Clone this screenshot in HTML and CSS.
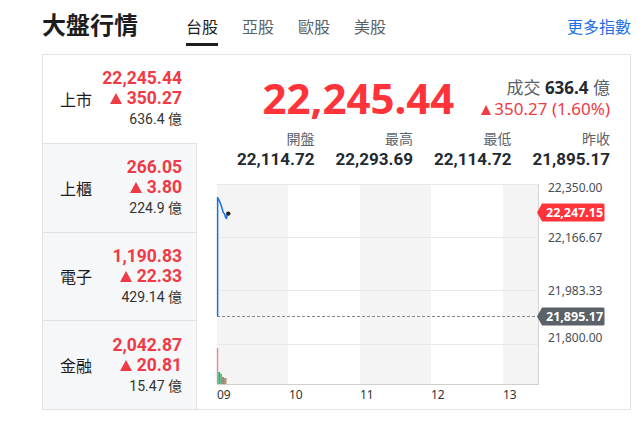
FILE: index.html
```html
<!DOCTYPE html>
<html lang="zh-Hant">
<head>
<meta charset="utf-8">
<title>大盤行情</title>
<link rel="stylesheet" href="styles.css">
</head>
<body>
<div class="page">
  <header class="head">
    <h1 class="title">大盤行情</h1>
    <nav class="tabs">
      <span class="tab active">台股</span>
      <span class="tab">亞股</span>
      <span class="tab">歐股</span>
      <span class="tab">美股</span>
    </nav>
    <a class="more">更多指數</a>
  </header>

  <section class="card">
    <div class="list">
      <div class="row selected">
        <span class="name">上市</span>
        <div class="vals">
          <div class="price up">22,245.44</div>
          <div class="chg up"><span class="tri"></span>350.27</div>
          <div class="vol">636.4 億</div>
        </div>
      </div>
      <div class="row">
        <span class="name">上櫃</span>
        <div class="vals">
          <div class="price up">266.05</div>
          <div class="chg up"><span class="tri"></span>3.80</div>
          <div class="vol">224.9 億</div>
        </div>
      </div>
      <div class="row">
        <span class="name">電子</span>
        <div class="vals">
          <div class="price up">1,190.83</div>
          <div class="chg up"><span class="tri"></span>22.33</div>
          <div class="vol">429.14 億</div>
        </div>
      </div>
      <div class="row">
        <span class="name">金融</span>
        <div class="vals">
          <div class="price up">2,042.87</div>
          <div class="chg up"><span class="tri"></span>20.81</div>
          <div class="vol">15.47 億</div>
        </div>
      </div>
    </div>

    <div class="detail">
      <div class="quote">
        <div class="big">22,245.44</div>
        <div class="side">
          <div class="turnover"><span class="muted">成交</span> <b>636.4</b> <span class="muted">億</span></div>
          <div class="pct up"><span class="tri sm"></span>350.27 (1.60%)</div>
        </div>
      </div>
      <div class="stats">
        <div class="stat"><div class="lbl">開盤</div><div class="num">22,114.72</div></div>
        <div class="stat"><div class="lbl">最高</div><div class="num">22,293.69</div></div>
        <div class="stat"><div class="lbl">最低</div><div class="num">22,114.72</div></div>
        <div class="stat"><div class="lbl">昨收</div><div class="num">21,895.17</div></div>
      </div>
      <svg class="chart" width="400" height="227" viewBox="210 178 400 227" xmlns="http://www.w3.org/2000/svg">
        <rect x="217" y="184" width="321" height="200" fill="#ffffff"/>
        <rect x="217" y="184" width="71" height="200" fill="#f4f4f4"/>
        <rect x="360" y="184" width="71" height="200" fill="#f4f4f4"/>
        <rect x="503" y="184" width="35" height="200" fill="#f4f4f4"/>
        <g stroke="#e8e8e8" stroke-width="1">
          <line x1="217" y1="184.5" x2="538" y2="184.5"/>
          <line x1="217" y1="237.5" x2="538" y2="237.5"/>
          <line x1="217" y1="290.5" x2="538" y2="290.5"/>
          <line x1="217" y1="344.5" x2="538" y2="344.5"/>
        </g>
        <line x1="538.5" y1="184" x2="538.5" y2="385" stroke="#d6d6d6"/>
        <line x1="217" y1="384.5" x2="539" y2="384.5" stroke="#cfcfcf"/>
        <line x1="217" y1="316.5" x2="538" y2="316.5" stroke="#8a8a8a" stroke-dasharray="3 2"/>
        <rect x="216.8" y="348" width="1.4" height="36" fill="#e58a8a"/>
        <rect x="218.3" y="372" width="2" height="12" fill="#2fb36b"/>
        <rect x="220.3" y="374" width="1.7" height="10" fill="#3cbf7a"/>
        <rect x="222" y="377" width="2" height="7" fill="#a98a72"/>
        <rect x="224" y="378" width="2.5" height="6" fill="#b3927a"/>
        <path d="M217.6 316 V197.5 L219.5 201 L221.7 207 L223.2 212.5 L224.6 214 L225.6 217.5 L226.6 218.5 L227.2 214" fill="none" stroke="#1a6fe0" stroke-width="1.5" stroke-linejoin="round"/>
        <circle cx="228.3" cy="213.6" r="2.2" fill="#222"/>
        <g class="ylab">
          <text x="548" y="192">22,350.00</text>
          <text x="548" y="241.5">22,166.67</text>
          <text x="548" y="294.5">21,983.33</text>
          <text x="548" y="342">21,800.00</text>
        </g>
        <g class="xlab">
          <text x="217" y="398.5">09</text>
          <text x="289" y="398.5">10</text>
          <text x="360" y="398.5">11</text>
          <text x="431" y="398.5">12</text>
          <text x="503" y="398.5">13</text>
        </g>
        <path d="M537 212.5 L542 203.5 H603 a1.5 1.5 0 0 1 1.5 1.5 V220 a1.5 1.5 0 0 1 -1.5 1.5 H542 Z" fill="#ff333a"/>
        <text class="tag" x="546" y="217">22,247.15</text>
        <path d="M537 316.5 L542 307.5 H603 a1.5 1.5 0 0 1 1.5 1.5 V324 a1.5 1.5 0 0 1 -1.5 1.5 H542 Z" fill="#5b6168"/>
        <text class="tag" x="546" y="321">21,895.17</text>
      </svg>
    </div>
  </section>
</div>
</body>
</html>
```
FILE: styles.css
```css
* { box-sizing: border-box; }
html, body { margin: 0; padding: 0; background: #fff; }
body {
  font-family: "Noto Sans", "Noto Sans CJK TC", sans-serif;
  color: #232a31;
  width: 643px;
  height: 433px;
  overflow: hidden;
}
.page { padding-left: 42px; width: 643px; }

.head {
  display: flex;
  align-items: flex-start;
  height: 54px;
  width: 589px;
}
.title {
  margin: 9px 0 0 0;
  font-size: 24px;
  line-height: 32px;
  font-weight: 700;
  color: #1d1d1f;
}
.tabs {
  display: flex;
  gap: 24px;
  margin-left: 48px;
  margin-top: 16px;
}
.tab {
  font-size: 16px;
  line-height: 22px;
  color: #5b636a;
  padding: 0 0 5px;
  border-bottom: 3px solid transparent;
  width: 32px;
  text-align: center;
}
.tab.active { color: #1d1d1f; border-bottom-color: #1d1d1f; }
.more {
  margin-left: auto;
  margin-top: 16px;
  font-size: 16px;
  line-height: 22px;
  color: #1f6fe5;
}

.card {
  display: flex;
  width: 589px;
  height: 356px;
  border: 1px solid #e2e2e2;
}
.list {
  width: 154px;
  flex-shrink: 0;
  display: flex;
  flex-direction: column;
}
.row {
  flex: 1;
  display: flex;
  align-items: center;
  justify-content: space-between;
  padding: 0 14px 0 17px;
  background: #f5f7f9;
  border-right: 1px solid #e2e2e2;
  border-top: 1px solid #e2e2e2;
}
.row.selected { background: #fff; border-right-color: transparent; border-top: 0; }
.name { font-size: 16px; color: #1d1d1f; }
.vals {
  text-align: right;
  font-family: Roboto, "Noto Sans CJK TC", sans-serif;
}
.price, .chg {
  font-size: 17.5px;
  line-height: 20px;
  font-weight: 700;
}
.vol { font-size: 14px; line-height: 20px; color: #333; padding-top: 1px; }
.up { color: #f03a45; }
.tri {
  display: inline-block;
  width: 0;
  height: 0;
  border-left: 6.5px solid transparent;
  border-right: 6.5px solid transparent;
  border-bottom: 11px solid currentColor;
  margin-right: 5px;
  vertical-align: 0;
}
.tri.sm {
  border-left-width: 5.5px;
  border-right-width: 5.5px;
  border-bottom-width: 10px;
  margin-right: 3px;
}

.detail {
  flex: 1;
  min-width: 0;
  display: flex;
  flex-direction: column;
}
.quote {
  display: flex;
  justify-content: flex-end;
  align-items: center;
  margin-top: 21px;
  padding-right: 20px;
  gap: 27px;
}
.big {
  font-size: 42px;
  line-height: 44px;
  font-weight: 700;
  color: #ff333a;
}
.side { text-align: right; font-size: 17px; line-height: 21px; }
.muted { color: #5b636a; }
.turnover b { color: #232a31; }
.stats {
  display: grid;
  grid-template-columns: repeat(4, 98.5px);
  justify-content: end;
  margin-top: 9px;
  padding-right: 20px;
  text-align: right;
}
.lbl { font-size: 14px; line-height: 19px; color: #5b636a; }
.num {
  font-family: Roboto, sans-serif;
  font-size: 17px;
  line-height: 20px;
  margin-top: 1px;
  font-weight: 700;
  color: #232a31;
}
.chart { display: block; margin-top: 9px; margin-left: 13px; }
.ylab text { font-size: 12px; fill: #464e56; font-family: "Noto Sans", sans-serif; }
.xlab text { font-size: 12px; fill: #333; font-family: "Noto Sans", sans-serif; }
.tag { font-size: 12.5px; font-weight: 700; fill: #fff; font-family: "Noto Sans", sans-serif; }
```
